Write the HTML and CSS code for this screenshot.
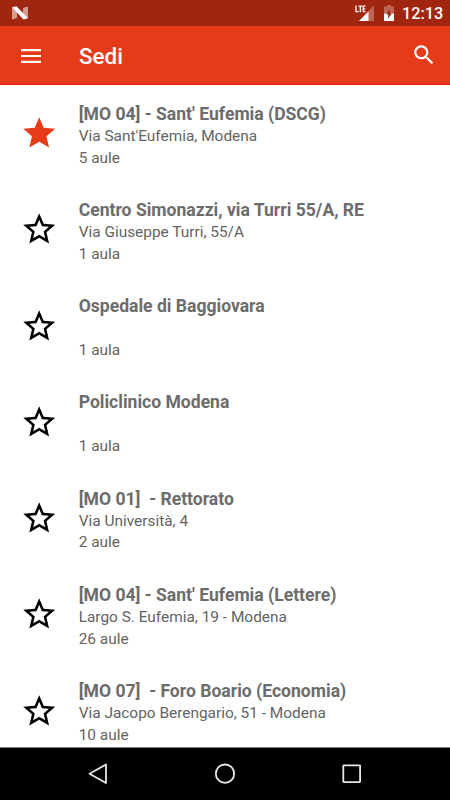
FILE: index.html
```html
<!DOCTYPE html>
<html lang="it">
<head>
<meta charset="utf-8">
<title>Sedi</title>
<link rel="stylesheet" href="styles.css">
</head>
<body>
<svg class="defs" width="0" height="0">
  <symbol id="star" viewBox="0 0 24 24"><path d="M12 17.27L18.18 21l-1.64-7.03L22 9.24l-7.19-.61L12 2 9.19 8.63 2 9.24l5.46 4.73L5.82 21z"/></symbol>
  <symbol id="star-outline" viewBox="0 0 24 24"><path d="M22 9.24l-7.19-.62L12 2 9.19 8.63 2 9.24l5.46 4.73L5.82 21 12 17.27 18.18 21l-1.63-7.03L22 9.24zM12 15.4l-3.76 2.27 1-4.28-3.32-2.88 4.38-.38L12 6.1l1.71 4.04 4.38.38-3.32 2.88 1 4.28L12 15.4z"/></symbol>
</svg>
<header class="status">
  <svg class="nougat" width="18" height="14" viewBox="0 0 18 14"><path fill="#fff" fill-opacity=".55" d="M1 1.400L6 5v7L1 13.400zM17 .6V12.500L12 9V2z"/><path fill="#fff" d="M1 1.200L5.500 .2 17 12.200 12.500 13.600z"/></svg>
  <div class="indicators">
    <svg class="signal" width="20" height="17" viewBox="0 0 20 17"><path fill="#fff" fill-opacity=".3" d="M19 1.200V17H4z"/><path fill="#fff" d="M4 17L13.500 7.500V17z"/><path class="lte" d="M1 1.500v6.200h2.500M3.500 2.100h3.600M5.300 2.100v6.200M10.500 2.100H8.200v5.600h2.300M8.200 4.900h2"/></svg>
    <svg class="battery" width="10" height="16" viewBox="0 0 10 16"><path fill="#fff" fill-opacity=".3" d="M3 0h4v1.600h3V9H0V1.600h3z"/><path fill="#fff" d="M0 8.600h10V16H0z"/><path fill="#a0260f" d="M5.900 4v4.300h1.900L4.100 13.800V9.500H2.200z"/></svg>
    <span class="clock">12:13</span>
  </div>
</header>
<nav class="appbar">
  <svg class="menu" width="20" height="14" viewBox="0 0 20 14"><path fill="#fff" d="M0 0h20v2.200H0zM0 5.900h20v2.200H0zM0 11.800h20V14H0z"/></svg>
  <h1 class="title">Sedi</h1>
  <svg class="search" width="26" height="26" viewBox="0 0 24 24"><path fill="#fff" d="M15.500 14h-.79l-.28-.27C15.410 12.590 16 11.110 16 9.500 16 5.910 13.090 3 9.500 3S3 5.910 3 9.500 5.910 16 9.500 16c1.610 0 3.090-.59 4.230-1.570l.27.28v.79l5 4.990L20.490 19l-4.990-5zm-6 0C7.010 14 5 11.990 5 9.500S7.010 5 9.500 5 14 7.010 14 9.500 11.990 14 9.500 14z"/></svg>
</nav>
<main class="list">
  <div class="row"><svg class="star on"><use href="#star"/></svg><div class="text"><h2>[MO 04] - Sant' Eufemia (DSCG)</h2><p>Via Sant'Eufemia, Modena</p><p>5 aule</p></div></div>
  <div class="row"><svg class="star"><use href="#star-outline"/></svg><div class="text"><h2>Centro Simonazzi, via Turri 55/A, RE</h2><p>Via Giuseppe Turri, 55/A</p><p>1 aula</p></div></div>
  <div class="row"><svg class="star"><use href="#star-outline"/></svg><div class="text"><h2>Ospedale di Baggiovara</h2><p></p><p>1 aula</p></div></div>
  <div class="row"><svg class="star"><use href="#star-outline"/></svg><div class="text"><h2>Policlinico Modena</h2><p></p><p>1 aula</p></div></div>
  <div class="row"><svg class="star"><use href="#star-outline"/></svg><div class="text"><h2>[MO 01]  - Rettorato</h2><p>Via Università, 4</p><p>2 aule</p></div></div>
  <div class="row"><svg class="star"><use href="#star-outline"/></svg><div class="text"><h2>[MO 04] - Sant' Eufemia (Lettere)</h2><p>Largo S. Eufemia, 19 - Modena</p><p>26 aule</p></div></div>
  <div class="row"><svg class="star"><use href="#star-outline"/></svg><div class="text"><h2>[MO 07]  - Foro Boario (Economia)</h2><p>Via Jacopo Berengario, 51 - Modena</p><p>10 aule</p></div></div>
</main>
<footer class="navbar">
  <svg width="22" height="22" viewBox="0 0 22 22"><path d="M19 1.500v18.500L2.500 10.800z"/></svg>
  <svg width="22" height="22" viewBox="0 0 22 22"><circle cx="11" cy="10.700" r="9.200"/></svg>
  <svg width="22" height="22" viewBox="0 0 22 22"><rect x="2.300" y="2.300" width="16.800" height="16.800" rx=".5"/></svg>
</footer>
</body>
</html>
```
FILE: styles.css
```css
* { box-sizing: border-box; margin: 0; padding: 0; }
body { width: 450px; height: 800px; display: flex; flex-direction: column; overflow: hidden; background: #fff; font-family: Roboto, sans-serif; }
svg { display: block; flex: none; }
.defs { display: none; }
.status { flex: none; height: 26px; padding: 0 8px 0 11px; display: flex; align-items: center; justify-content: space-between; background: #a0260f; }
.indicators { display: flex; align-items: center; height: 26px; color: #fff; }
.signal { margin: 0 9px 1px 0; }
.battery { margin-right: 8px; }
.lte { fill: none; stroke: #fff; stroke-width: 1.3; }
.clock { width: 40px; font-size: 16.3px; font-weight: 500; line-height: 26px; padding-top: 2px; }
.appbar { flex: none; height: 59px; padding: 0 13.500px 0 21px; display: flex; align-items: center; background: #e63b19; border-bottom: 1px solid #e8210c; }
.menu { margin-top: 2px; }
.title { flex: 1; margin-left: 38px; padding-top: 1px; color: #fff; font-size: 22.4px; font-weight: 500; }
.search { margin-top: 0; }
.list { flex: 1; min-height: 0; overflow: hidden; padding-top: .3px; }
.row { height: 96.22px; padding-left: 20.100px; display: flex; align-items: center; }
.star { width: 38.4px; height: 38.4px; fill: #000; }
.star.on { fill: #e63b19; }
.text { margin-left: 20.200px; padding-top: 3.800px; color: #636363; white-space: pre; }
.text h2 { height: 22.400px; font-size: 17.57px; line-height: 22.400px; font-weight: 700; color: #6c6c6c; }
.text p { height: 21.400px; font-size: 15.42px; line-height: 22px; }
.navbar { flex: none; height: 53px; padding: 0 87px; display: flex; align-items: center; justify-content: space-between; background: #000; border-top: 1px solid #777; }
.navbar svg { fill: none; stroke: #e8e8e8; stroke-width: 1.800; stroke-linejoin: round; }
```
